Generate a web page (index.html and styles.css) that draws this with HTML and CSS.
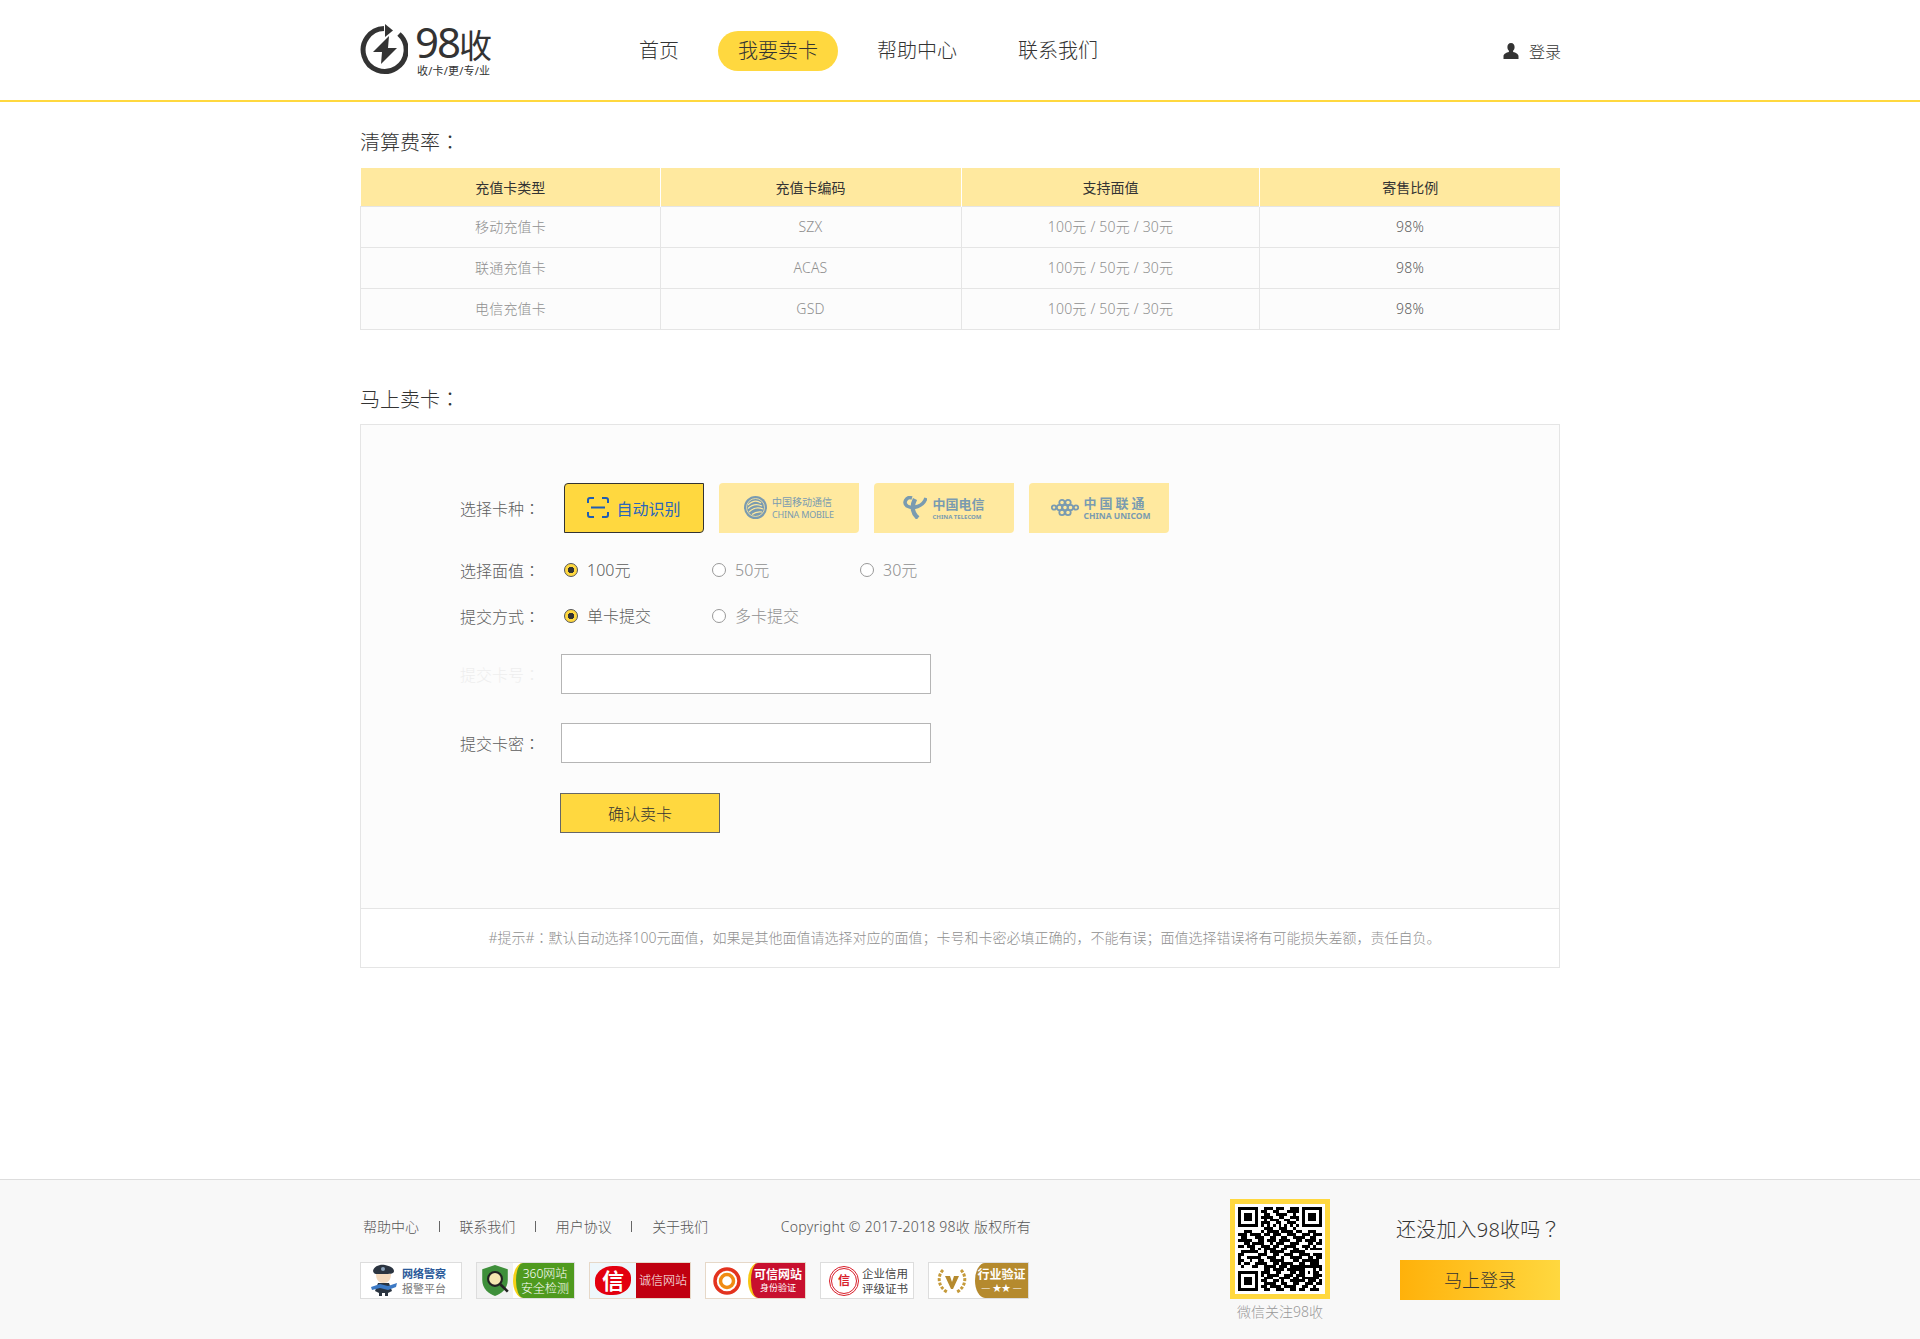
FILE: index.html
```html
<!DOCTYPE html>
<html lang="zh-CN">
<head>
    <meta charset="UTF-8">
    <title>我要卖卡</title>
    <link rel="stylesheet" href="styles.css">
</head>
<body>
<header class="header">
    <div class="wrap header-in">
        <a class="logo" href="#">
            <svg class="logo-icon" width="48" height="52" viewBox="0 0 48 52">
                <path d="M39 10A21.5 21.5 0 1 1 24 4.5" fill="none" stroke="#333" stroke-width="5"/>
                <path d="M25 0l8 6.500-8 6.500z" fill="#333"/>
                <path d="M29 12L13 28h9l-1 12 16-16h-9z" fill="#333"/>
            </svg>
            <span class="logo-text">
                <span class="logo-name">98<b>收</b></span>
                <span class="logo-sub">收/卡/更/专/业</span>
            </span>
        </a>
        <ul class="nav">
            <li><a href="#">首页</a></li>
            <li><a class="active" href="#">我要卖卡</a></li>
            <li><a href="#">帮助中心</a></li>
            <li><a href="#">联系我们</a></li>
        </ul>
        <a class="login" href="#">
            <svg width="16" height="16" viewBox="0 0 16 16">
                <path d="M8 0c2.400 0 3.600 1.800 3.600 4 0 1.600-.6 3-1.500 3.800v1.200c2.600.7 5.400 1.800 5.400 4.200V16H.500v-2.800c0-2.400 2.800-3.500 5.400-4.200V7.800C5 7 4.400 5.600 4.400 4 4.400 1.800 5.600 0 8 0z" fill="#333"/>
            </svg>
            <span>登录</span>
        </a>
    </div>
</header>

<main class="wrap main">
    <h2 class="title">清算费率<i class="mark" lang="zh-TW">：</i></h2>
    <table class="rate">
        <thead>
        <tr>
            <th class="col1">充值卡类型</th>
            <th class="col2">充值卡编码</th>
            <th class="col3">支持面值</th>
            <th class="col4">寄售比例</th>
        </tr>
        </thead>
        <tbody>
        <tr>
            <td>移动充值卡</td>
            <td class="col2">SZX</td>
            <td>100元 / 50元 / 30元</td>
            <td class="col4 ratio">98%</td>
        </tr>
        <tr>
            <td>联通充值卡</td>
            <td class="col2">ACAS</td>
            <td>100元 / 50元 / 30元</td>
            <td class="col4 ratio">98%</td>
        </tr>
        <tr>
            <td>电信充值卡</td>
            <td class="col2">GSD</td>
            <td>100元 / 50元 / 30元</td>
            <td class="col4 ratio">98%</td>
        </tr>
        </tbody>
    </table>

    <h2 class="title title-sell">马上卖卡<i class="mark" lang="zh-TW">：</i></h2>
    <div class="sell">
        <form class="sell-form">
            <div class="row row-card">
                <span class="label">选择卡种<i class="mark" lang="zh-TW">：</i></span>
                <div class="cards">
                    <a class="card card-auto" href="#">
                        <svg width="22" height="21" viewBox="0 0 22 21">
                            <path d="M7 1H3a2 2 0 0 0-2 2v3M15 1h4a2 2 0 0 1 2 2v3M7 20H3a2 2 0 0 1-2-2v-3M15 20h4a2 2 0 0 0 2-2v-3M4 10.500h14" fill="none" stroke="#1f5cb4" stroke-width="2"/>
                        </svg>
                        <span>自动识别</span>
                    </a>
                    <a class="card card-mobile" href="#">
                        <svg width="23" height="23" viewBox="0 0 23 23">
                            <circle cx="11.500" cy="11.500" r="11.500" fill="#7a9bb0"/>
                            <circle cx="11.500" cy="11.500" r="9" fill="none" stroke="#ffe99f" stroke-width=".8"/>
                            <g fill="none" stroke="#ffe99f" stroke-width="1.200">
                                <path d="M4 9c4-4 9-5 13-2"/>
                                <path d="M4 12.500c4-4 9-5 14-2.500"/>
                                <path d="M5 16c4-4 9-5 14-3"/>
                                <path d="M8 18.500c3-2.500 7-3 10-2.500"/>
                            </g>
                        </svg>
                        <span class="card-name">
                            <span class="mobile-cn">中国移动通信</span>
                            <span class="mobile-en">CHINA MOBILE</span>
                        </span>
                    </a>
                    <a class="card card-telecom" href="#">
                        <svg width="24" height="23" viewBox="0 0 24 23">
                            <path d="M9 2C3 0 0 7 4 10c6 3 16 1 19-8" fill="none" stroke="#7a9bb0" stroke-width="3.500"/>
                            <path d="M12 3C8 11 10 18 15 22" fill="none" stroke="#7a9bb0" stroke-width="4.500"/>
                        </svg>
                        <span class="card-name">
                            <span class="telecom-cn">中国电信</span>
                            <span class="telecom-en">CHINA TELECOM</span>
                        </span>
                    </a>
                    <a class="card card-unicom" href="#">
                        <svg width="28" height="21" viewBox="0 0 28 21">
                            <g fill="none" stroke="#7a9bb0" stroke-width="1.800">
                                <circle cx="3" cy="10.500" r="2.200"/>
                                <circle cx="8.500" cy="10.500" r="2.700"/>
                                <circle cx="14" cy="10.500" r="2.700"/>
                                <circle cx="19.500" cy="10.500" r="2.700"/>
                                <circle cx="25" cy="10.500" r="2.200"/>
                                <circle cx="11" cy="5.500" r="2.700"/>
                                <circle cx="17" cy="5.500" r="2.700"/>
                                <circle cx="11" cy="15.500" r="2.700"/>
                                <circle cx="17" cy="15.500" r="2.700"/>
                            </g>
                        </svg>
                        <span class="card-name">
                            <span class="unicom-cn">中国联通</span>
                            <span class="unicom-en">CHINA UNICOM</span>
                        </span>
                    </a>
                </div>
            </div>
            <div class="row row-money">
                <span class="label">选择面值<i class="mark" lang="zh-TW">：</i></span>
                <label class="radio"><input type="radio" name="money" checked><span>100元</span></label>
                <label class="radio"><input type="radio" name="money"><span>50元</span></label>
                <label class="radio"><input type="radio" name="money"><span>30元</span></label>
            </div>
            <div class="row row-way">
                <span class="label">提交方式<i class="mark" lang="zh-TW">：</i></span>
                <label class="radio"><input type="radio" name="way" checked><span>单卡提交</span></label>
                <label class="radio"><input type="radio" name="way"><span>多卡提交</span></label>
            </div>
            <div class="row row-input">
                <span class="label label-off">提交卡号<i class="mark" lang="zh-TW">：</i></span>
                <input class="text" type="text">
            </div>
            <div class="row row-input row-pass">
                <span class="label">提交卡密<i class="mark" lang="zh-TW">：</i></span>
                <input class="text" type="text">
            </div>
            <button class="submit" type="button">确认卖卡</button>
        </form>
        <p class="tip">#提示#<i class="mark" lang="zh-TW">：</i>默认自动选择100元面值，如果是其他面值请选择对应的面值；卡号和卡密必填正确的，不能有误；面值选择错误将有可能损失差额，责任自负。</p>
    </div>
</main>

<footer class="footer">
    <div class="wrap footer-in">
        <div class="foot-left">
            <div class="foot-links">
                <a href="#">帮助中心</a><i></i>
                <a href="#">联系我们</a><i></i>
                <a href="#">用户协议</a><i></i>
                <a href="#">关于我们</a>
                <span class="copy">Copyright © 2017-2018 98收 版权所有</span>
            </div>
            <div class="badges">
                <a class="badge badge-police" href="#">
                    <svg width="28" height="33" viewBox="0 0 28 33">
                        <path d="M3 7C4 2 10 0 15 1s9 3 9 6-4 3-11 3-9 1-10-3z" fill="#2b3440"/>
                        <circle cx="13" cy="5" r="2" fill="#8aa0b8"/>
                        <path d="M6 10h15c0 6-3 9-7.500 9S6 16 6 10z" fill="#f4d9bd"/>
                        <path d="M8 19h11l3 8-4 2v3h-3v-3h-3v3H9v-3l-4-2z" fill="#2b3440"/>
                        <path d="M1 23l9-3 8 2 9-3-1 4-8 3-8-2-8 2z" fill="#3c79c4"/>
                    </svg>
                    <span class="police-text">
                        <b>网络警察</b>
                        <span>报警平台</span>
                    </span>
                </a>
                <a class="badge badge-360" href="#">
                    <span class="side-left">
                        <svg width="32" height="33" viewBox="0 0 28 31">
                            <path d="M14 1l12 4v10c0 8-6 13-12 15C8 28 2 23 2 15V5z" fill="#3e8f3a"/>
                            <circle cx="14" cy="14" r="6.500" fill="#f4e7b0" stroke="#222" stroke-width="2"/>
                            <path d="M19 19l7 7" stroke="#222" stroke-width="2.500"/>
                        </svg>
                    </span>
                    <span class="side-right">360网站<br>安全检测</span>
                </a>
                <a class="badge badge-cx" href="#">
                    <span class="side-left">
                        <span class="cx-mark">信</span>
                    </span>
                    <span class="side-right">诚信网站</span>
                </a>
                <a class="badge badge-kx" href="#">
                    <span class="side-left">
                        <svg width="30" height="30" viewBox="0 0 30 30">
                            <circle cx="15" cy="15" r="12" fill="none" stroke="#e3331f" stroke-width="3.500"/>
                            <circle cx="15" cy="15" r="6.500" fill="none" stroke="#f08a13" stroke-width="3.500"/>
                        </svg>
                    </span>
                    <span class="side-right">
                        <b>可信网站</b>
                        <small>身份验证</small>
                    </span>
                </a>
                <a class="badge badge-qy" href="#">
                    <span class="stamp">信</span>
                    <span class="qy-text">企业信用<br>评级证书</span>
                </a>
                <a class="badge badge-hy" href="#">
                    <span class="side-left">
                        <svg width="32" height="30" viewBox="0 0 32 30">
                            <path d="M7 4C1 10 2 21 11 26M25 4c6 6 5 17-4 22" fill="none" stroke="#c59a3a" stroke-width="3" stroke-dasharray="3 1.500"/>
                            <path d="M9 10h5l2 6 2-6h5l-6 13h-2z" fill="#b58a2e"/>
                        </svg>
                    </span>
                    <span class="side-right">
                        <b>行业验证</b>
                        <small>— ★★ —</small>
                    </span>
                </a>
            </div>
        </div>
        <div class="foot-code">
            <div class="qrcode">
                <svg width="84" height="84" viewBox="0 0 29 29" shape-rendering="crispEdges">
                    <g fill="none" stroke="#000">
                        <rect x=".5" y=".5" width="6" height="6"/>
                        <rect x="22.500" y=".5" width="6" height="6"/>
                        <rect x=".5" y="22.500" width="6" height="6"/>
                        <path d="M9 .5h3M13 .5h3M18 .5h3M8 1.500h2M12 1.500h2M17 1.500h4M9 2.500h2M13 2.500h4M19 2.500h1M8 3.500h4M14 3.500h2M18 3.500h3M9 4.500h1M11 4.500h3M16 4.500h2M20 4.500h1M8 5.500h3M13 5.500h2M17 5.500h3M8 6.500h1M10 6.500h1M12 6.500h1M14 6.500h1M16 6.500h1M18 6.500h1M20 6.500h1M9 7.500h3M14 7.500h3M19 7.500h1M2 8.500h3M8 8.500h1M10 8.500h4M15 8.500h4M20 8.500h2M24 8.500h3M0 9.500h3M4 9.500h4M9 9.500h2M12 9.500h3M17 9.500h3M22 9.500h3M26 9.500h3M1 10.500h2M6 10.500h3M11 10.500h2M15 10.500h2M19 10.500h4M25 10.500h2M0 11.500h5M7 11.500h2M10 11.500h3M14 11.500h4M20 11.500h2M23 11.500h4M28 11.500h1M2 12.500h2M5 12.500h4M11 12.500h1M13 12.500h3M18 12.500h3M24 12.500h2M27 12.500h2M0 13.500h2M3 13.500h3M8 13.500h3M12 13.500h2M16 13.500h4M22 13.500h3M26 13.500h1M4 14.500h2M7 14.500h1M9 14.500h4M15 14.500h2M19 14.500h2M23 14.500h1M25 14.500h4M1 15.500h6M9 15.500h1M11 15.500h5M18 15.500h5M0 16.500h2M7 16.500h3M12 16.500h2M16 16.500h3M21 16.500h4M26 16.500h3M0 17.500h1M3 17.500h5M10 17.500h3M15 17.500h1M18 17.500h4M24 17.500h2M27 17.500h2M0 18.500h2M4 18.500h1M7 18.500h2M11 18.500h5M19 18.500h2M22 18.500h6M0 19.500h1M2 19.500h2M6 19.500h4M12 19.500h2M15 19.500h4M21 19.500h2M25 19.500h3M1 20.500h1M5 20.500h2M9 20.500h4M14 20.500h3M18 20.500h4M27 20.500h2M9 21.500h2M12 21.500h4M17 21.500h5M28 21.500h1M8 22.500h3M13 22.500h2M18 22.500h2M21 22.500h1M27 22.500h1M8 23.500h1M10 23.500h4M16 23.500h3M20 23.500h2M27 23.500h2M9 24.500h3M14 24.500h4M19 24.500h2M27 24.500h1M8 25.500h2M12 25.500h2M15 25.500h1M18 25.500h5M24 25.500h3M28 25.500h1M9 26.500h4M15 26.500h2M19 26.500h2M23 26.500h3M27 26.500h2M8 27.500h2M11 27.500h4M16 27.500h4M22 27.500h2M26 27.500h1M9 28.500h2M13 28.500h3M18 28.500h2M21 28.500h2M25 28.500h3"/>
                        <rect x="22.500" y="20.500" width="4" height="4"/>
                    </g>
                    <g fill="#000">
                        <rect x="2" y="2" width="3" height="3"/>
                        <rect x="24" y="2" width="3" height="3"/>
                        <rect x="2" y="24" width="3" height="3"/>
                        <rect x="24" y="22" width="1" height="1"/>
                    </g>
                </svg>
            </div>
            <p>微信关注98收</p>
        </div>
        <div class="foot-join">
            <p>还没加入98收吗<i class="mark" lang="zh-TW">？</i></p>
            <a class="join-btn" href="#">马上登录</a>
        </div>
    </div>
</footer>
</body>
</html>
```

FILE: styles.css
```css
*{
    box-sizing: border-box;
}
html,body{
    margin: 0;
    padding: 0;
}
body{
    display: flex;
    flex-direction: column;
    min-height: 100vh;
    background: #fff;
    color: #333;
    font-family: "Noto Sans", "Noto Sans CJK SC", sans-serif;
    font-weight: 300;
}
a{
    color: inherit;
    text-decoration: none;
}
ul{
    margin: 0;
    padding: 0;
    list-style: none;
}
p{
    margin: 0;
}
.wrap{
    width: 1200px;
    margin: 0 auto;
}
/* the TC face centres its full-width punctuation */
.mark{
    font-family: "Noto Sans CJK TC", sans-serif;
    font-style: normal;
}

/* header */
.header{
    height: 102px;
    border-bottom: 2px solid #ffd83f;
}
.header-in{
    display: flex;
    align-items: center;
    height: 100px;
}
.logo{
    display: flex;
    align-items: center;
    width: 259px;
    color: #333;
}
.logo-text{
    display: flex;
    flex-direction: column;
    margin-left: 7px;
}
.logo-name{
    font-size: 42px;
    line-height: 38px;
    letter-spacing: -2px;
    font-weight: 400;
}
.logo-name b{
    font-size: 33px;
    letter-spacing: 0;
    font-weight: 400;
}
.logo-sub{
    margin-left: 2px;
    font-size: 11px;
    line-height: 12px;
    letter-spacing: .2px;
    font-weight: 400;
}
.nav{
    display: flex;
    gap: 19px;
    margin-top: 2px;
}
.nav li:last-child{
    margin-left: 2px;
}
.nav a{
    display: block;
    height: 40px;
    line-height: 40px;
    padding: 0 20px;
    border-radius: 20px;
    font-size: 20px;
}
.nav a.active{
    background: #ffd83f;
}
.login{
    display: flex;
    align-items: center;
    gap: 10px;
    margin: 2px -1px 0 auto;
    font-size: 16px;
}

/* rate table */
.main{
    flex: 1;
}
.title{
    margin: 25px 0 10px;
    font-size: 20px;
    line-height: 30px;
    font-weight: 300;
    color: #333;
}
.title-sell{
    margin: 54px 0 9px;
}
.rate{
    width: 1200px;
    table-layout: fixed;
    border-collapse: collapse;
    font-size: 14px;
    text-align: center;
}
.rate .col1{
    width: 300px;
}
.rate .col2{
    width: 301px;
    padding-right: 2px;
}
.rate .col3{
    width: 298px;
}
.rate .col4{
    padding-left: 2px;
}
.rate th{
    height: 38px;
    padding-bottom: 1px;
    background: #ffe99f;
    border-right: 1px solid #fff;
    color: #333;
    font-weight: 400;
}
.rate th:last-child{
    border-right: 0;
}
.rate td{
    height: 41px;
    padding-bottom: 2px;
    background: #fcfcfc;
    border: 1px solid #e5e5e5;
    color: #8f8f8f;
    letter-spacing: .2px;
}
.rate td.ratio{
    color: #5c5c5c;
}

/* sell form */
.sell{
    border: 1px solid #e5e5e5;
    background: #fff;
}
.sell-form{
    height: 484px;
    padding: 58px 0 0 99px;
    border-bottom: 1px solid #e5e5e5;
    background: #fcfcfc;
}
.row{
    display: flex;
    align-items: center;
    font-size: 16px;
    color: #5c5c5c;
}
.label{
    width: 100px;
    color: #5c5c5c;
}
.label-off{
    color: #eee;
}
.cards{
    display: flex;
    gap: 15px;
    margin-left: 4px;
}
.card{
    display: flex;
    align-items: center;
    justify-content: center;
    width: 140px;
    height: 50px;
    border-radius: 4px 0 4px 0;
    background: #ffe99f;
}
.card-auto{
    gap: 7px;
    border: 1px solid #333;
    background: #ffd83f;
    color: #2a66bb;
    font-weight: 400;
}
.card-name{
    display: flex;
    flex-direction: column;
    margin-left: 5px;
    color: #7a9bb0;
}
.mobile-cn{
    font-size: 10px;
    line-height: 13px;
    font-weight: 400;
}
.mobile-en{
    font-size: 9px;
    line-height: 11px;
    letter-spacing: -.2px;
    font-weight: 400;
}
.telecom-cn{
    font-size: 13px;
    line-height: 18px;
    font-weight: 700;
}
.telecom-en{
    font-size: 6px;
    line-height: 8px;
    font-weight: 700;
    white-space: nowrap;
}
.card-unicom{
    padding-left: 3px;
}
.unicom-cn{
    font-size: 13px;
    line-height: 16px;
    letter-spacing: 3px;
    font-weight: 700;
}
.unicom-en{
    font-size: 8.500px;
    line-height: 10px;
    font-weight: 700;
    white-space: nowrap;
}
.row-money{
    height: 30px;
    margin-top: 22px;
}
.row-way{
    height: 30px;
    margin-top: 16px;
}
.radio{
    display: flex;
    align-items: center;
    gap: 9px;
    width: 148px;
    color: #8f8f8f;
}
.radio span{
    padding-bottom: 2px;
}
.label + .radio{
    margin-left: 4px;
}
.radio input{
    appearance: none;
    width: 14px;
    height: 14px;
    margin: 0;
    border: 1px solid #999;
    border-radius: 50%;
    background: #fff;
}
.radio input:checked{
    border-color: #555;
    background: radial-gradient(circle, #333 0, #333 3px, #ffd83f 3.500px);
}
.radio input:checked + span{
    color: #5c5c5c;
}
.row-input{
    margin-top: 23px;
}
.row-pass{
    margin-top: 29px;
}
.text{
    width: 370px;
    height: 40px;
    margin-left: 1px;
    border: 1px solid #b5b5b5;
    background: #fff;
}
.submit{
    display: block;
    width: 160px;
    height: 40px;
    margin: 30px 0 0 100px;
    padding: 0;
    border: 1px solid #666;
    background: #ffd83f;
    color: #333;
    font-family: inherit;
    font-size: 16px;
    font-weight: 300;
}
.tip{
    height: 58px;
    padding-left: 9px;
    line-height: 56px;
    font-size: 14px;
    color: #8f8f8f;
    text-align: center;
}

/* footer */
.footer{
    height: 160px;
    border-top: 1px solid #ddd;
    background: #f8f8f8;
}
.footer-in{
    display: flex;
}
.foot-left{
    width: 870px;
    padding-top: 36px;
}
.foot-links{
    display: flex;
    align-items: center;
    gap: 19.700px;
    height: 20px;
    padding-left: 3px;
    font-size: 14px;
    color: #555;
}
.foot-links i{
    width: 1px;
    height: 11px;
    background: #666;
}
.foot-links .copy{
    margin-left: 53px;
    letter-spacing: .25px;
}
.badges{
    display: flex;
    gap: 14px;
    margin-top: 26px;
}
.badge{
    display: flex;
    align-items: center;
    height: 37px;
    overflow: hidden;
    border: 1px solid #ddd;
    background: #fff;
    color: #fff;
}
.side-left{
    display: flex;
    align-items: center;
    justify-content: center;
    height: 100%;
}
.side-right{
    display: flex;
    flex-direction: column;
    align-items: center;
    justify-content: center;
    flex: 1;
    height: 100%;
    font-size: 12px;
    line-height: 15px;
    font-weight: 400;
    text-align: center;
}
.side-right small{
    font-size: 9px;
    line-height: 12px;
}
.badge-police{
    width: 102px;
    padding-left: 9px;
}
.police-text{
    display: flex;
    flex-direction: column;
    margin-left: 4px;
    font-size: 11px;
    line-height: 15px;
    color: #777;
    font-weight: 400;
}
.police-text b{
    color: #2a5a9a;
}
.badge-360{
    width: 99px;
}
.badge-360 .side-left{
    width: 36px;
    background: #f2f2f2;
}
.badge-360 .side-right{
    border-left: 3px solid #f7d117;
    border-radius: 10px 0 0 10px / 50% 0 0 50%;
    background: #4f9a1e;
    font-weight: 300;
}
.badge-cx{
    width: 102px;
    border-color: #e6d8c8;
}
.badge-cx .side-left{
    width: 46px;
    background: #eef7fb;
}
.cx-mark{
    width: 36px;
    height: 29px;
    border-radius: 50% 40% 50% 40%;
    background: #e3000f;
    color: #fff;
    font-size: 22px;
    line-height: 28px;
    font-weight: 700;
    text-align: center;
}
.badge-cx .side-right{
    background: #c00010;
    font-weight: 300;
}
.badge-kx{
    width: 101px;
    border-color: #e6d8c8;
}
.badge-kx .side-left{
    width: 42px;
}
.badge-kx .side-right{
    border-left: 3px solid #f7c613;
    border-radius: 10px 0 0 10px / 50% 0 0 50%;
    background: #c8102e;
}
.badge-qy{
    width: 94px;
    padding-left: 8px;
}
.stamp{
    flex: none;
    width: 30px;
    height: 30px;
    border: 3px double #d81e2a;
    border-radius: 50%;
    color: #d81e2a;
    font-size: 12px;
    line-height: 24px;
    font-weight: 700;
    text-align: center;
}
.qy-text{
    margin-left: 3px;
    color: #444;
    font-size: 11.500px;
    line-height: 15px;
    font-weight: 400;
    white-space: nowrap;
}
.badge-hy{
    width: 101px;
}
.badge-hy .side-left{
    width: 46px;
}
.badge-hy .side-right{
    border-radius: 10px 0 0 10px / 50% 0 0 50%;
    background: #b58a2e;
}
.foot-code{
    width: 100px;
    padding-top: 19px;
    text-align: center;
}
.qrcode{
    display: flex;
    align-items: center;
    justify-content: center;
    width: 100px;
    height: 100px;
    border: 5px solid #ffd83f;
    background: #fff;
}
.foot-code p{
    margin: 2px -5px 0;
    font-size: 14px;
    line-height: 22px;
    color: #999;
    white-space: nowrap;
}
.foot-join{
    display: flex;
    flex-direction: column;
    align-items: flex-end;
    width: 164px;
    margin-left: auto;
    padding-top: 34px;
}
.foot-join p{
    width: 164px;
    font-size: 20px;
    line-height: 30px;
    letter-spacing: .2px;
    color: #333;
    white-space: nowrap;
}
.join-btn{
    display: block;
    width: 160px;
    height: 40px;
    margin-top: 15px;
    background: linear-gradient(90deg, #ffb10a, #ffd83f);
    font-size: 18px;
    line-height: 40px;
    text-align: center;
}
```
